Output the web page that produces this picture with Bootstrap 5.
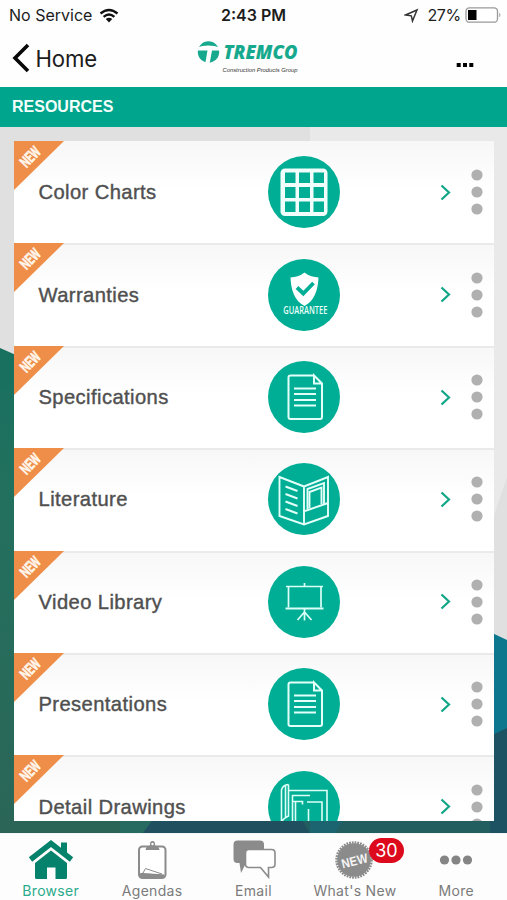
<!DOCTYPE html>
<html lang="en">
<head>
<meta charset="utf-8">
<meta name="viewport" content="width=device-width, initial-scale=1">
<title>Resources</title>
<link href="https://cdn.jsdelivr.net/npm/bootstrap@5.3.0/dist/css/bootstrap.min.css" rel="stylesheet">
<style>
body{font-family:Inter,"Liberation Sans",sans-serif;color:#1c1c1c;background:#fefefe}
.app{height:900px;width:507px}
.status{height:30px;font-size:16px}
.status svg,.topnav svg,.tabs svg{display:block;flex:none}
.carrier{margin-left:9px}
.wifi{margin-left:7px}
.charge{margin-left:8px;letter-spacing:-.3px}
.battery{margin:0 5px 0 4px}
.topnav{height:57px}
.back{font-size:22.2px;color:#1c1c1c;letter-spacing:-.2px}
.back svg{margin-left:11px;margin-right:5.5px}
.logo{left:197px;top:10px}
.more-btn{margin-right:33px;margin-top:13px}
.section-bar{height:40px;padding-left:12px;background:#00a58d;color:#f4fffc;font:bold 16px "Liberation Sans",Arial,sans-serif}
.stage{height:706px;background:#e2e2e3;padding:14px 13.5px 12.5px 14px}
.backdrop{z-index:0}
.menu{height:679.5px;z-index:1;border-radius:0;background:#fff}
.menu-row{height:102.42px;flex:none;border:0;border-radius:0;padding:0;background:linear-gradient(#f7f7f7,#fff 48%,#fff)}
.menu-row+.menu-row{box-shadow:inset 0 2px #eaeaea}
.ribbon{left:0;top:0;width:50px;height:49px}
.title{width:254px;padding-left:24.5px;font:20.2px "Liberation Sans",Arial,sans-serif;color:#505050;-webkit-text-stroke:.4px #505050;letter-spacing:.4px;white-space:nowrap;padding-top:1px}
.chev{margin-left:100px}
.kebab{margin-left:20px}
.tabs{height:67px;background:#fdfdfd;border-top:1px solid #f2f6f6}
.tabs .nav-link{padding:5px 0 0;color:#7b7b7b;font-size:14px;line-height:17px;letter-spacing:.3px}
.tabs .nav-link.active{color:#2bab8c}
.tabs svg{height:43px}
.count{left:64.5px;top:4px;width:35.500px;height:25px;background:#dd0a1e;font-size:18px;font-weight:400;line-height:25px;padding:0;letter-spacing:0}
</style>
<script src="https://cdn.jsdelivr.net/npm/bootstrap@5.3.0/dist/js/bootstrap.bundle.min.js"></script>
</head>
<body>
<svg width="0" height="0" class="position-absolute">
<defs>
<symbol id="new" viewBox="0 0 50 49"><path d="M0 0H50L0 49Z" fill="#ef8e48"/><text transform="translate(12.5 27.500) rotate(-46)" font-family="Roboto,sans-serif" font-weight="700" font-size="15.500" textLength="22" lengthAdjust="spacingAndGlyphs" fill="#fff5ea" stroke="#fff5ea" stroke-width=".5">NEW</text></symbol>
<symbol id="chevron" viewBox="0 0 11 17"><path d="M1.5 1.5 9 8.5 1.5 15.5" fill="none" stroke="#10a687" stroke-width="2.200"/></symbol>
<symbol id="dots" viewBox="0 0 12 46"><g fill="#b0b0b0"><circle cx="6" cy="6" r="5.6"/><circle cx="6" cy="23" r="5.6"/><circle cx="6" cy="40" r="5.6"/></g></symbol>
<symbol id="grid" viewBox="0 0 72 72"><circle cx="36" cy="36" r="36" fill="#00ae95"/><rect x="12.5" y="12.5" width="47" height="47.5" rx="4.5" fill="#f1fffc"/><path fill="#00ae95" d="M17 16.5h10.500v10.500H17zM31 16.500h11v10.500H31zM45.500 16.500h10.500v10.500h-10.500zM17 31h10.500v11H17zM31 31h11v11H31zM45.500 31h10.500v11h-10.500zM17 45.500h10.500v10.500H17zM31 45.500h11v10.500H31zM45.500 45.500h10.500v10.500h-10.500z"/></symbol>
<symbol id="guarantee" viewBox="0 0 72 72"><circle cx="36" cy="36" r="36" fill="#00ae95"/><path d="M36.500 13.500C32.500 17 27 18.200 22.500 18.500C23 31 26.500 42 36.500 47C46.500 42 50 31 50.500 18.500C46 18.200 40.500 17 36.500 13.500Z" fill="#fff"/><path d="M29 28.500 35.300 34.500 45.500 24" fill="none" stroke="#00ae95" stroke-width="3.800"/><text x="15.300" y="54.500" font-family="Open Sans,sans-serif" font-weight="600" font-size="10" textLength="44" lengthAdjust="spacingAndGlyphs" fill="#eafffa">GUARANTEE</text></symbol>
<symbol id="doc" viewBox="0 0 72 72"><circle cx="36" cy="36" r="36" fill="#00ae95"/><g fill="none" stroke="#e2fff9" stroke-width="2"><path d="M46 14.500H22.500q-2 0-2 2V56q0 2 2 2H52q2 0 2-2V22.500L46 14.500V22.500H54"/><path d="M26 27.500H48M26 33H48M26 39H48M26 44.500H48"/></g></symbol>
<symbol id="book" viewBox="0 0 72 72"><circle cx="36" cy="36" r="36" fill="#00ae95"/><g fill="none" stroke="#e2fff9" stroke-width="1.900"><path d="M36 23.500 11.500 14V53L36 61.500 60 53V14L36 23.500V61.500M37 48 60 40M39.500 46V26L56 20V40.500"/><path d="M41.500 45V29L53.500 24.500V41M17.500 23.500 29.500 28M17.500 31 29.500 35.500M17.500 38.500 29.500 43M17.500 46 29.500 50.500"/></g></symbol>
<symbol id="screen" viewBox="0 0 72 72"><circle cx="36" cy="36" r="36" fill="#00ae95"/><g fill="none" stroke="#dcfff7" stroke-width="1.700"><path d="M18 20.500H55M20.500 20.500V41.500M53 20.500V41.500M36.500 17V20.500M36.500 42V54.500M36.500 46 29.500 54M36.500 46 43.500 54"/><path d="M17.500 42.500H55.500" stroke-width="2.200"/></g></symbol>
<symbol id="plan" viewBox="0 0 72 72"><circle cx="36" cy="36" r="36" fill="#00ae95"/><g fill="none" stroke="#dcfff7" stroke-width="1.600"><path d="M20.500 19.500H59V60H18M20.500 13.500V45Q14 48 13.500 52V19Q14.500 14 20.500 13.500M17.500 15V46"/><path d="M24.500 56V24.500H42M27.500 30.500V52M24.500 30.500H34.500V33.500M39 31H54V56M40.500 38V50"/></g></symbol>
</defs>
</svg>
<div class="app d-flex flex-column overflow-hidden">
  <header>
    <div class="status d-flex align-items-center position-relative">
      <span class="carrier">No Service</span>
      <svg class="wifi" width="20" height="15" viewBox="0 0 20 15"><g fill="none" stroke="#111" stroke-width="2.400"><path d="M1.500 5.500Q10-1.500 18.500 5.500M4.600 8.800Q10 4.300 15.400 8.800"/></g><path d="M6.800 11Q10 8.500 13.200 11L10 14.500Z" fill="#111"/></svg>
      <span class="position-absolute start-50 translate-middle-x fw-semibold text-nowrap">2:43 PM</span>
      <svg class="ms-auto" width="15" height="15" viewBox="0 0 15 15"><path d="M1.500 7 13 2 8.500 13 7.300 7.800Z" fill="none" stroke="#333" stroke-width="1.500"/></svg>
      <span class="charge">27%</span>
      <svg class="battery" width="37" height="16" viewBox="0 0 37 16"><rect x="1" y=".8" width="31.500" height="14.400" rx="3.500" fill="#fff" stroke="#999" stroke-width="1.300"/><rect x="3" y="3" width="8.500" height="10" fill="#000"/><path d="M34.300 5.500Q36.500 8 34.300 10.500Z" fill="#999"/></svg>
    </div>
    <nav class="topnav navbar p-0 d-flex flex-nowrap align-items-center position-relative">
      <a class="back d-flex align-items-center text-decoration-none" href="#">
        <svg width="19" height="30" viewBox="0 0 19 30"><path d="M17 2 4 15 17 28" fill="none" stroke="#080808" stroke-width="3.600"/></svg>Home</a>
      <svg class="logo position-absolute" width="103" height="36" viewBox="0 0 103 36"><circle cx="11.500" cy="12" r="10.700" fill="#16a98d"/><path d="M0 7.500Q11 3.500 23 7.500V10.500H15L12.700 23H8.300L10.500 10.500H0Z" fill="#fff"/><text x="26.500" y="19" font-family="Open Sans,sans-serif" font-weight="800" font-style="italic" font-size="18.500" textLength="74" lengthAdjust="spacingAndGlyphs" fill="#16a98d">TREMCO</text><text x="25.500" y="31.500" font-family="Liberation Sans,sans-serif" font-style="italic" font-size="6" textLength="75" lengthAdjust="spacingAndGlyphs" fill="#333">Construction Products Group</text></svg>
      <svg class="more-btn ms-auto" width="18" height="6" viewBox="0 0 18 6"><path d="M.7 1h4v4h-4zM7 1h4v4H7zM13.300 1h4v4h-4z"/></svg>
    </nav>
  </header>
  <div class="section-bar d-flex align-items-center">RESOURCES</div>
  <main class="stage position-relative">
    <svg class="backdrop position-absolute start-0 top-0" width="507" height="706" viewBox="0 0 507 706">
      <defs><linearGradient id="lg" x1="0" y1="0" x2="0" y2="1"><stop offset="0" stop-color="#17705f"/><stop offset=".3" stop-color="#23705e"/><stop offset="1" stop-color="#2b6658"/></linearGradient></defs>
      <path d="M0 0H507V706H0Z" fill="#e0e0e1"/><path d="M310 0H507V350L490 400H310Z" fill="#e9e9e9"/>
      <path d="M0 221 25 232 150 706H0Z" fill="url(#lg)"/>
      <path d="M0 690H507V706H0Z" fill="#225e60"/><path d="M0 690H125V706H0Z" fill="#2b6558"/><path d="M120 690H155L143 706H120Z" fill="#276a60"/><path d="M155 690H300L310 706H143Z" fill="#204f60"/><path d="M310 690H345L335 706H310Z" fill="#1b6470"/>
      <path d="M490 505 507 513V706H490Z" fill="#0d788d"/><path d="M490 609 507 601V706H490Z" fill="#1d5263"/>
    </svg>
    <div class="menu list-group position-relative overflow-hidden">
      <a href="#" class="menu-row list-group-item d-flex align-items-center"><svg class="ribbon position-absolute"><use href="#new"/></svg><span class="title">Color Charts</span><svg width="72" height="72"><use href="#grid"/></svg><svg class="chev" width="11" height="17"><use href="#chevron"/></svg><svg class="kebab" width="12" height="46"><use href="#dots"/></svg></a>
      <a href="#" class="menu-row list-group-item d-flex align-items-center"><svg class="ribbon position-absolute"><use href="#new"/></svg><span class="title">Warranties</span><svg width="72" height="72"><use href="#guarantee"/></svg><svg class="chev" width="11" height="17"><use href="#chevron"/></svg><svg class="kebab" width="12" height="46"><use href="#dots"/></svg></a>
      <a href="#" class="menu-row list-group-item d-flex align-items-center"><svg class="ribbon position-absolute"><use href="#new"/></svg><span class="title">Specifications</span><svg width="72" height="72"><use href="#doc"/></svg><svg class="chev" width="11" height="17"><use href="#chevron"/></svg><svg class="kebab" width="12" height="46"><use href="#dots"/></svg></a>
      <a href="#" class="menu-row list-group-item d-flex align-items-center"><svg class="ribbon position-absolute"><use href="#new"/></svg><span class="title">Literature</span><svg width="72" height="72"><use href="#book"/></svg><svg class="chev" width="11" height="17"><use href="#chevron"/></svg><svg class="kebab" width="12" height="46"><use href="#dots"/></svg></a>
      <a href="#" class="menu-row list-group-item d-flex align-items-center"><svg class="ribbon position-absolute"><use href="#new"/></svg><span class="title">Video Library</span><svg width="72" height="72"><use href="#screen"/></svg><svg class="chev" width="11" height="17"><use href="#chevron"/></svg><svg class="kebab" width="12" height="46"><use href="#dots"/></svg></a>
      <a href="#" class="menu-row list-group-item d-flex align-items-center"><svg class="ribbon position-absolute"><use href="#new"/></svg><span class="title">Presentations</span><svg width="72" height="72"><use href="#doc"/></svg><svg class="chev" width="11" height="17"><use href="#chevron"/></svg><svg class="kebab" width="12" height="46"><use href="#dots"/></svg></a>
      <a href="#" class="menu-row list-group-item d-flex align-items-center"><svg class="ribbon position-absolute"><use href="#new"/></svg><span class="title">Detail Drawings</span><svg width="72" height="72"><use href="#plan"/></svg><svg class="chev" width="11" height="17"><use href="#chevron"/></svg><svg class="kebab" width="12" height="46"><use href="#dots"/></svg></a>
    </div>
  </main>
  <nav class="tabs nav nav-justified flex-nowrap">
    <a class="nav-item nav-link active d-flex flex-column align-items-center" href="#"><svg width="46" viewBox="0 0 46 43"><path d="M33 3.500h6v12l-6-5z" fill="#05826b"/><path d="M2.500 20.500 23 4.500 43.500 20.500" fill="none" stroke="#05826b" stroke-width="5.400"/><path d="M23 11.500 39 24V38.500q0 1.500-1.500 1.500H27.500V28.500H19V40H8.500Q7 40 7 38.500V24Z" fill="#05826b"/></svg>Browser</a>
    <a class="nav-item nav-link d-flex flex-column align-items-center" href="#"><svg width="32" viewBox="0 0 32 43"><rect x="3" y="7.500" width="26.500" height="31.500" rx="3.500" fill="#fff" stroke="#8b8b8b" stroke-width="2"/><path d="M3 34.500 8 33.500 28.500 35.500V38.500H4Z" fill="#8b8b8b"/><path d="M7 34 9.500 29.500 26 35" fill="#fff" stroke="#8b8b8b"/><path d="M9.500 11Q10 7 14 6.500V5Q14 2 16.500 2T19 5V6.500Q23 7 23.500 11Z" fill="#8b8b8b"/><circle cx="16.500" cy="5" r="1.200" fill="#fff"/></svg>Agendas</a>
    <a class="nav-item nav-link d-flex flex-column align-items-center" href="#"><svg width="46" viewBox="0 0 46 43"><path d="M6.500 1.500H29q4 0 4 4V20q0 4-4 4H15L10 34 8.500 24H6.500q-4 0-4-4V5.500q0-4 4-4Z" fill="#8b8b8b"/><path d="M18 10.500H40.500q3.500 0 3.500 3.500V25q0 3.500-3.500 3.500H37.500V38L29.500 28.500H18q-3.500 0-3.500-3.500V14q0-3.500 3.500-3.500Z" fill="#fff" stroke="#8b8b8b" stroke-width="1.600"/></svg>Email</a>
    <a class="nav-item nav-link d-flex flex-column align-items-center position-relative" href="#"><svg width="40" viewBox="0 0 40 43"><circle cx="19" cy="21" r="16.800" fill="#8b8b8b"/><circle cx="19" cy="21" r="17.500" fill="none" stroke="#8b8b8b" stroke-width="2.500" stroke-dasharray="1.750 1"/><text x="19.500" y="26.500" transform="rotate(-14 19 21)" text-anchor="middle" font-family="Liberation Sans,sans-serif" font-weight="700" font-size="13" textLength="27" lengthAdjust="spacingAndGlyphs" fill="#f5f5f5">NEW</text></svg>What's New<span class="count badge rounded-pill position-absolute">30</span></a>
    <a class="nav-item nav-link d-flex flex-column align-items-center" href="#"><svg width="34" viewBox="0 0 34 43"><g fill="#858585"><circle cx="5.500" cy="21" r="4.600"/><circle cx="17" cy="21" r="4.600"/><circle cx="28.500" cy="21" r="4.600"/></g></svg>More</a>
  </nav>
</div>
</body>
</html>
